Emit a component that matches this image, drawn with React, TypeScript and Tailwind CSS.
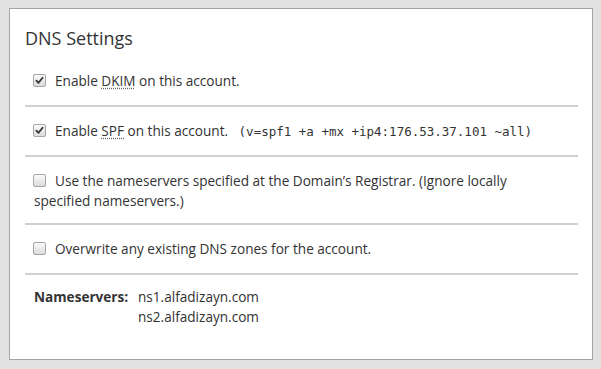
import React from 'react';

function Box({ checked }: { checked?: boolean }) {
  return (
    <span className="relative inline-block align-[-1px] w-[13px] h-[13px] -ml-px mr-[9px] rounded-[2px] border border-[#a5a5a5] bg-gradient-to-b from-[#fafafa] to-[#dcdcdc]">
      {checked && (
        <svg viewBox="0 0 13 13" className="absolute -left-px -top-px w-[13px] h-[13px]">
          <path d="M3.4 6.7 L5.5 8.8 L9.6 3.8" fill="none" stroke="#333" strokeWidth="1.8" strokeLinecap="round" strokeLinejoin="round" />
        </svg>
      )}
    </span>
  );
}

function Abbr({ children }: { children: React.ReactNode }) {
  return (
    <span className="underline decoration-dotted decoration-[#666] underline-offset-[2px]">{children}</span>
  );
}

export default function App() {
  return (
    <div
      className="w-[601px] h-[369px] bg-[#e1e1e1] pt-[8px] pl-[9px] text-[#333]"
      style={{ fontFamily: '"Open Sans", "Liberation Sans", sans-serif' }}
    >
      <div className="w-[584px] h-[352px] border border-[#a4a4a4] bg-white pt-[17px] pl-[15px] pr-[14px]">
        <h1 className="text-[18px] leading-[24px] font-normal">DNS Settings</h1>

        {/* DKIM */}
        <div className="mt-[21px] pb-[14px] pl-[9px] text-[13.6px] leading-[20px] border-b-2 border-[#d0d0d0]">
          <Box checked />
          Enable <Abbr>DKIM</Abbr> on this account.
        </div>

        {/* SPF */}
        <div className="pt-[14px] pb-[13px] pl-[9px] text-[13.6px] leading-[20px] border-b-2 border-[#d0d0d0]">
          <Box checked />
          Enable <Abbr>SPF</Abbr> on this account.{' '}
          <span className="ml-[7px] text-[12.5px]" style={{ fontFamily: '"DejaVu Sans Mono", "Liberation Mono", monospace' }}>
            (v=spf1 +a +mx +ip4:176.53.37.101 ~all)
          </span>
        </div>

        {/* registrar nameservers */}
        <div className="pt-[14px] pb-[12px] pl-[9px] text-[13.6px] leading-[20px] border-b-2 border-[#d0d0d0]">
          <Box />
          Use the nameservers specified at the Domain’s Registrar. (Ignore locally
          <br />
          specified nameservers.)
        </div>

        {/* overwrite */}
        <div className="pt-[14px] pb-[14px] pl-[9px] text-[13.6px] leading-[20px] border-b-2 border-[#d0d0d0]">
          <Box />
          Overwrite any existing DNS zones for the account.
        </div>

        <div className="pt-[12px] pl-[9px] flex text-[13.6px] leading-[20px]">
          <span className="w-[104px] font-bold">Nameservers:</span>
          <div>
            <div>ns1.alfadizayn.com</div>
            <div>ns2.alfadizayn.com</div>
          </div>
        </div>
      </div>
    </div>
  );
}
